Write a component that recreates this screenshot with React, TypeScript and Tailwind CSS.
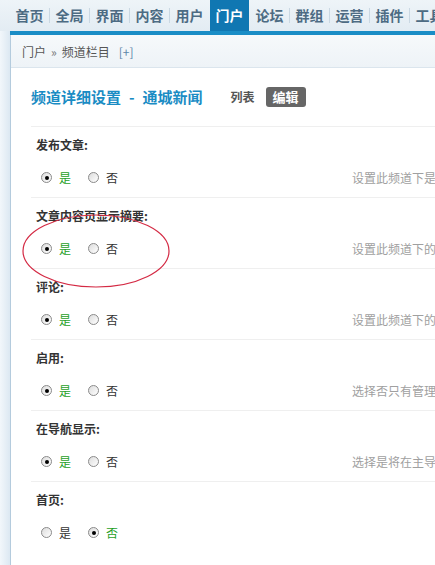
import React from "react";

const navItems = ["首页", "全局", "界面", "内容", "用户", "门户", "论坛", "群组", "运营", "插件", "工具"];

const rows: { label: string; yes: boolean; desc: string }[] = [
  { label: "发布文章:", yes: true, desc: "设置此频道下是否允许发布文章" },
  { label: "文章内容页显示摘要:", yes: true, desc: "设置此频道下的文章内容页是否显示摘要" },
  { label: "评论:", yes: true, desc: "设置此频道下的文章是否允许评论" },
  { label: "启用:", yes: true, desc: "选择否只有管理员可以访问此频道" },
  { label: "在导航显示:", yes: true, desc: "选择是将在主导航中显示此频道" },
  { label: "首页:", yes: false, desc: "" },
];

function Radio({ checked }: { checked: boolean }) {
  return (
    <span className="relative inline-flex w-[11px] h-[11px] rounded-full border border-[#8a8a8a] bg-gradient-to-br from-[#dcdcdc] to-white items-center justify-center">
      {checked && <span className="w-[4px] h-[4px] rounded-full bg-black" />}
    </span>
  );
}

export default function App() {
  return (
    <div className="relative w-[435px] h-[565px] overflow-hidden bg-[#e8f0f5] font-['Noto_Sans_CJK_SC',sans-serif]">
      <nav className="h-[31px] flex items-stretch pl-[10px] bg-gradient-to-b from-[#eef4f8] to-[#e3ecf3]">
        {navItems.map((n, i) => {
          const active = n === "门户";
          const nextActive = navItems[i + 1] === "门户";
          return (
            <React.Fragment key={n}>
              <div
                className={
                  "w-[39px] shrink-0 flex items-center justify-center text-[14px] font-bold " +
                  (active ? "bg-[#1077b2] text-white" : "text-[#4d6b83]")
                }
              >
                {n}
              </div>
              <div className="w-[1px] shrink-0 flex items-center">
                {!active && !nextActive && <div className="w-[1px] h-[15px] bg-[#cad8e3]" />}
              </div>
            </React.Fragment>
          );
        })}
      </nav>
      <div className="flex h-[534px]">
        <div className="w-[10px] shrink-0 bg-gradient-to-r from-[#f2f7fb] to-[#dce8f2]" />
        <div className="flex-1 flex flex-col border-l border-[#b4cbdd] bg-white">
          <div className="h-[4px] bg-[#1a8dc6] -ml-[1px]" />
          <div className="h-[33px] flex items-center pl-[11px] pt-[2px] bg-gradient-to-b from-[#f6f9fb] to-[#eef3f7] border-b border-[#dbe5ed] text-[12px] text-[#555]">
            <span>门户</span>
            <span className="mx-[5px] text-[#777]">»</span>
            <span>频道栏目</span>
            <span className="ml-[9px] text-[#5c85a8]">[+]</span>
          </div>
          <div className="pl-[20px]">
            <div className="h-[58px] flex items-center">
              <span className="text-[15px] font-bold text-[#1a8cc4] whitespace-nowrap flex items-center">
                <span>频道详细设置</span>
                <span className="mx-[8px]">-</span>
                <span>通城新闻</span>
              </span>
              <span className="ml-[28px] text-[12px] font-bold text-[#555]">列表</span>
              <span className="ml-[11px] h-[20px] px-[7px] rounded-[3px] bg-[#666] text-white text-[13px] font-bold flex items-center">编辑</span>
            </div>
            {rows.map((r) => (
              <div key={r.label} className="h-[71px] border-t border-[#efefef]">
                <div className="h-[36px] flex items-center pl-[5px] text-[12px] font-bold text-[#333]">{r.label}</div>
                <div className="h-[29px] flex items-center pl-[10px] text-[12px] whitespace-nowrap">
                  <div className="w-[311px] shrink-0 flex items-center">
                    <Radio checked={r.yes} />
                    <span className={"ml-[7px] " + (r.yes ? "text-[#1fa01f]" : "text-[#333]")}>是</span>
                    <span className="ml-[17px] flex items-center">
                      <Radio checked={!r.yes} />
                    </span>
                    <span className={"ml-[7px] " + (!r.yes ? "text-[#1fa01f]" : "text-[#333]")}>否</span>
                  </div>
                  <span className="shrink-0 text-[#a0a0a0]">{r.desc}</span>
                </div>
              </div>
            ))}
          </div>
        </div>
      </div>
      <svg className="absolute left-0 top-0 pointer-events-none" width="435" height="565">
        <ellipse cx="96" cy="251" rx="73" ry="36" fill="none" stroke="#d42a44" strokeWidth="1.2" />
      </svg>
    </div>
  );
}
